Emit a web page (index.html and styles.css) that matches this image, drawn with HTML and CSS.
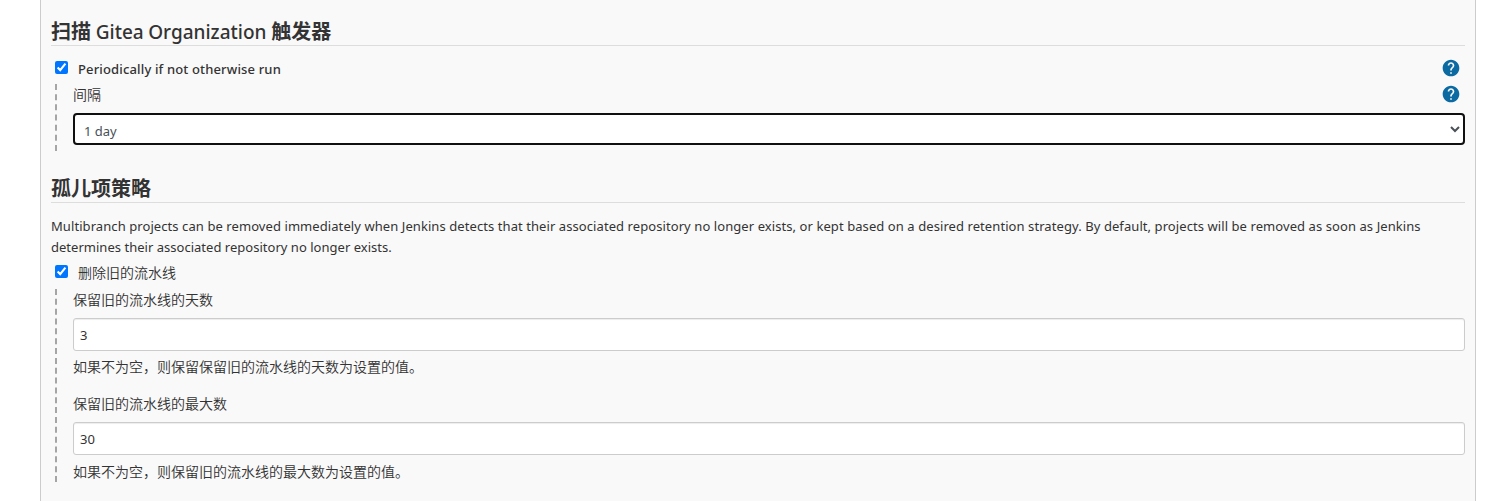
FILE: index.html
```html
<!DOCTYPE html>
<html lang="zh-CN">
<head>
<meta charset="utf-8">
<title>Jenkins</title>
<link rel="stylesheet" href="styles.css">
</head>
<body>
<svg class="defs" width="0" height="0"><symbol id="help" viewBox="0 0 24 24"><path d="M12 2C6.48 2 2 6.48 2 12s4.48 10 10 10 10-4.48 10-10S17.52 2 12 2zm1 17h-2v-2h2v2zm2.07-7.75l-.9.92C13.45 12.9 13 13.5 13 15h-2v-.5c0-1.1.45-2.1 1.17-2.83l1.24-1.26c.37-.36.59-.86.59-1.41 0-1.1-.9-2-2-2s-2 .9-2 2H8c0-2.21 1.79-4 4-4s4 1.79 4 4c0 .88-.36 1.68-.93 2.25z"/></symbol></svg>
<main class="panel">
  <section class="section">
    <h2 class="title"><span class="title-zh">扫描</span> <span class="title-latin">Gitea Organization</span> <span class="title-zh">触发器</span></h2>
    <div class="option option-trigger">
      <input class="check" type="checkbox" checked id="periodic">
      <label class="option-label strong" for="periodic">Periodically if not otherwise run</label>
      <svg class="help"><use href="#help"/></svg>
    </div>
    <div class="nested nested-trigger">
      <div class="row"><label class="zh">间隔</label><svg class="help"><use href="#help"/></svg></div>
      <select class="select"><option>1 day</option></select>
    </div>
  </section>
  <section class="section orphan">
    <h2 class="title"><span class="title-zh">孤儿项策略</span></h2>
    <p class="description"><span class="line line-a">Multibranch projects can be removed immediately when Jenkins detects that their associated repository no longer exists, or kept based on a desired retention strategy. By default, projects will be removed as soon as Jenkins</span> <span class="line line-b">determines their associated repository no longer exists.</span></p>
    <div class="option option-discard">
      <input class="check" type="checkbox" checked id="discard">
      <label class="option-label zh" for="discard">删除旧的流水线</label>
    </div>
    <div class="nested nested-discard">
      <div class="field">
        <label class="zh field-label">保留旧的流水线的天数</label>
        <input class="text" type="text" value="3">
        <div class="zh hint hint-days">如果不为空，则保留保留旧的流水线的天数为设置的值。</div>
      </div>
      <div class="field">
        <label class="zh field-label">保留旧的流水线的最大数</label>
        <input class="text" type="text" value="30">
        <div class="zh hint">如果不为空，则保留旧的流水线的最大数为设置的值。</div>
      </div>
    </div>
  </section>
</main>
</body>
</html>
```
FILE: styles.css
```css
* { box-sizing: border-box; }
body {
  margin: 0;
  background: #fff;
  color: #333;
  font: 14px/21px "Noto Sans", "Noto Sans CJK SC", sans-serif;
  overflow: hidden;
}
.defs { display: block; }
.panel {
  height: 501px;
  margin: 0 28px 0 40px;
  padding: 15px 10px 0;
  border: solid #ccc;
  border-width: 0 1px;
  background: #f9f9f9;
}
.title {
  height: 31px;
  margin: 0;
  border-bottom: 1px solid #ddd;
  font-size: 20px;
  line-height: 31px;
  white-space: nowrap;
  word-spacing: -0.5px;
}
.title-zh { font-family: "Noto Sans CJK SC", sans-serif; font-weight: 700; }
.title-latin { font-size: 19px; font-weight: 500; }
.option { display: flex; align-items: center; padding-left: 4px; }
.check { width: 13px; height: 13px; margin: 0 10px 3px 0; }
.option-label { flex: 1; white-space: nowrap; }
.strong { font-size: 13px; font-weight: 500; letter-spacing: 0.15px; }
.zh { font-family: "Noto Sans CJK SC", sans-serif; font-size: 14px; font-weight: 350; white-space: nowrap; }
.help { width: 20px; height: 20px; margin-right: 4px; fill: #0b6aa2; }
.option-trigger { height: 26px; margin-top: 10px; }
.option-trigger .help { margin-bottom: 2px; }
.nested { margin-left: 4px; padding-left: 16px; border-left: 2px dashed #a5a5a5; }
.nested-trigger { height: 67px; margin-top: 2px; }
.row { display: flex; justify-content: space-between; height: 29px; }
.select {
  display: block;
  width: 100%;
  height: 32px;
  padding: 3px 0 0 5px;
  border: 2px solid #101010;
  border-radius: 4px;
  background: #fff;
  color: #495057;
  font: 13px "Noto Sans", sans-serif;
  outline: 0;
}
.orphan { margin-top: 21px; }
.description { margin: 13px 0 0; height: 42px; font-size: 13px; }
.line { display: block; width: max-content; white-space: nowrap; }
.line-a { letter-spacing: 0.077px; }
.line-b { letter-spacing: 0.02px; }
.option-discard { height: 26px; margin-top: 2px; }
.option-discard .option-label { padding-bottom: 2px; }
.nested-discard { height: 193px; margin-top: 3px; }
.field { height: 104px; }
.field-label { display: block; height: 29px; }
.text {
  display: block;
  width: 100%;
  height: 33px;
  padding: 1px 6px 0;
  border: 1px solid #ccc;
  border-radius: 3px;
  background: #fff;
  box-shadow: inset 0 1px 1px rgba(0, 0, 0, .075);
  color: #333;
  font: 13px "Noto Sans", sans-serif;
}
.hint { padding-top: 6px; }
.hint-days { padding-top: 5px; }
```
